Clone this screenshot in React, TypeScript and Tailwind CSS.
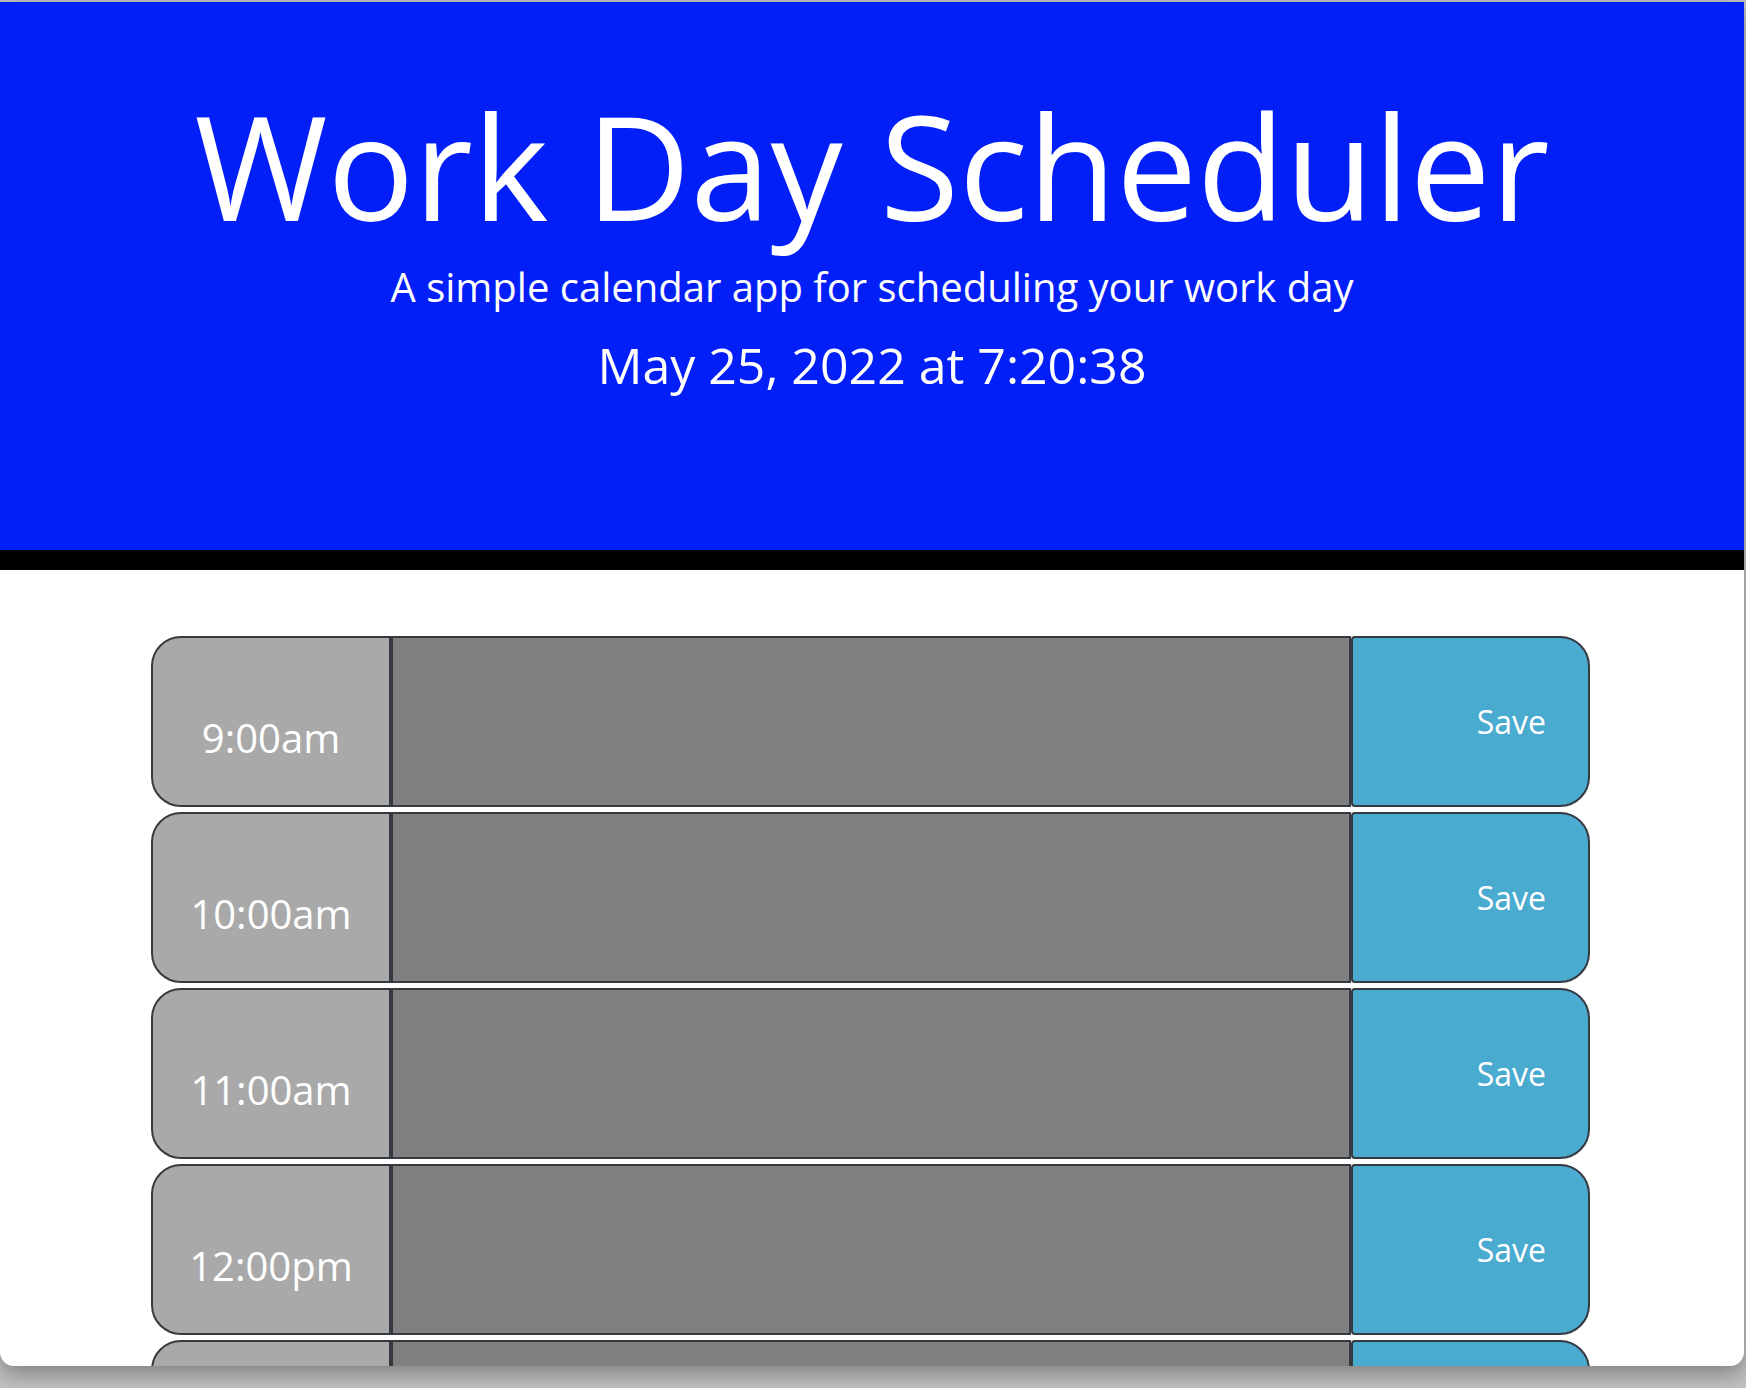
const hours = ['9:00am', '10:00am', '11:00am', '12:00pm', '1:00pm', '2:00pm', '3:00pm', '4:00pm', '5:00pm']

function TimeRow({ label }: { label: string }) {
  return (
    <div className="grid grid-cols-[240px_960px_239px] h-[171px]">
      <div className="bg-[#a9a9a9] border-2 border-[#343a40] rounded-l-[30px] pt-[70px] text-center text-white text-[40px] leading-[60px]">
        {label}
      </div>
      <textarea className="bg-[#808080] border-2 border-[#343a40] resize-none outline-none text-white text-[32px] p-3" />
      <button className="bg-[#4aabd1] border-2 border-[#343a40] rounded-r-[30px] rounded-l-[4px] flex items-center justify-end pr-[42px] text-white text-[32px] leading-[48px]">
        Save
      </button>
    </div>
  )
}

export default function App() {
  return (
    <div className="h-[1388px] w-[1746px] overflow-hidden bg-[#c2c2c2] pt-[2px]" style={{ fontFamily: '"Open Sans", Arial, sans-serif' }}>
      <div className="w-[1744px] h-[1364px] bg-white rounded-b-[14px] overflow-hidden shadow-[0_8px_22px_rgba(0,0,0,0.35)]">
        <header className="h-[568px] bg-[#021ff7] border-b-[20px] border-black text-white text-center pt-[77px]">
          <h1 className="text-[144px] leading-[173px] font-normal">Work Day Scheduler</h1>
          <p className="mt-[5px] text-[40px] leading-[60px]">A simple calendar app for scheduling your work day</p>
          <p className="mt-[18px] text-[50px] leading-[60px] font-medium">May 25, 2022 at 7:20:38</p>
        </header>
        <main className="ml-[151px] mt-[66px] flex flex-col gap-[5px]">
          {hours.map((h) => (
            <TimeRow key={h} label={h} />
          ))}
        </main>
      </div>
    </div>
  )
}
